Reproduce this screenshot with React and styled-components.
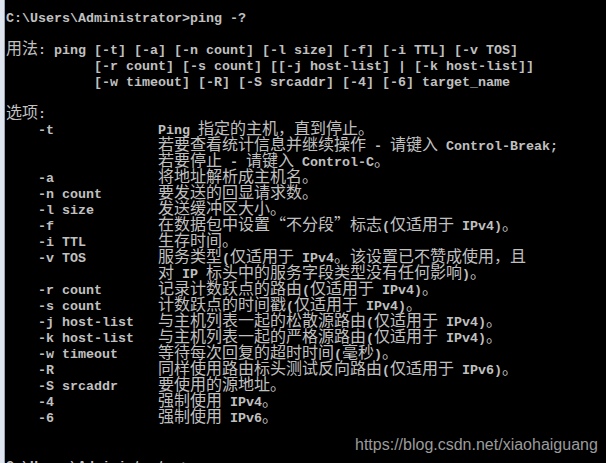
import styled, { createGlobalStyle } from "styled-components";

const GlobalStyle = createGlobalStyle`
  html, body {
    margin: 0;
    padding: 0;
    background: #000;
    overflow: hidden;
  }
`

const Window = styled.div`
  position: relative;
  width: 606px;
  height: 463px;
  box-sizing: border-box;
  background: #000;
  border-left: 4px solid #dfe5ee;
  overflow: hidden;
`

const Screen = styled.div`
  height: 100%;
  box-sizing: border-box;
  border-left: 1px solid #9ba4b0;
  padding: 11px 0 0 1px;
`

const Line = styled.div`
  height: 16px;
  line-height: 16px;
  white-space: pre;
  font-family: "Liberation Mono", "DejaVu Sans Mono", monospace;
  font-size: 13.333px;
  font-weight: bold;
  color: #c0c0c0;
`

// one double-width console cell for a Chinese character
const Wide = styled.span`
  display: inline-block;
  width: 16px;
  text-align: center;
  font-family: "Noto Sans CJK SC", "Noto Sans CJK TC", sans-serif;
  font-size: 16px;
  font-weight: normal;
  line-height: 0;
`

const Watermark = styled.div`
  position: absolute;
  left: 351px;
  top: 437px;
  font-family: "Liberation Sans", Arial, sans-serif;
  font-size: 16px;
  line-height: 16px;
  color: #9b9b9b;
`

const WIDE = /[\u2E80-\u9FFF\u3000-\u303F\uFF00-\uFFEF\u201C\u201D]/

const lines = [
    "C:\\Users\\Administrator>ping -?",
    "",
    "用法: ping [-t] [-a] [-n count] [-l size] [-f] [-i TTL] [-v TOS]",
    "           [-r count] [-s count] [[-j host-list] | [-k host-list]]",
    "           [-w timeout] [-R] [-S srcaddr] [-4] [-6] target_name",
    "",
    "选项:",
    "    -t             Ping 指定的主机，直到停止。",
    "                   若要查看统计信息并继续操作 - 请键入 Control-Break;",
    "                   若要停止 - 请键入 Control-C。",
    "    -a             将地址解析成主机名。",
    "    -n count       要发送的回显请求数。",
    "    -l size        发送缓冲区大小。",
    "    -f             在数据包中设置“不分段”标志(仅适用于 IPv4)。",
    "    -i TTL         生存时间。",
    "    -v TOS         服务类型(仅适用于 IPv4。该设置已不赞成使用，且",
    "                   对 IP 标头中的服务字段类型没有任何影响)。",
    "    -r count       记录计数跃点的路由(仅适用于 IPv4)。",
    "    -s count       计数跃点的时间戳(仅适用于 IPv4)。",
    "    -j host-list   与主机列表一起的松散源路由(仅适用于 IPv4)。",
    "    -k host-list   与主机列表一起的严格源路由(仅适用于 IPv4)。",
    "    -w timeout     等待每次回复的超时时间(毫秒)。",
    "    -R             同样使用路由标头测试反向路由(仅适用于 IPv6)。",
    "    -S srcaddr     要使用的源地址。",
    "    -4             强制使用 IPv4。",
    "    -6             强制使用 IPv6。",
    "",
    "",
    "C:\\Users\\Administrator>",
]

const ConsoleLine = ({text}) => {
    const parts = []
    let buf = ""
    for (const ch of text) {
        if (WIDE.test(ch)) {
            if (buf) {
                parts.push(<span key={parts.length}>{buf}</span>)
                buf = ""
            }
            parts.push(<Wide key={parts.length}>{ch}</Wide>)
        } else {
            buf += ch
        }
    }
    if (buf) parts.push(<span key={parts.length}>{buf}</span>)
    return <Line>{parts}</Line>
}

export default function App() {
    return (
        <>
            <GlobalStyle/>
            <Window>
                <Screen>
                    {lines.map((text, i) => <ConsoleLine key={i} text={text}/>)}
                </Screen>
                <Watermark>https://blog.csdn.net/xiaohaiguang</Watermark>
            </Window>
        </>
    )
}
